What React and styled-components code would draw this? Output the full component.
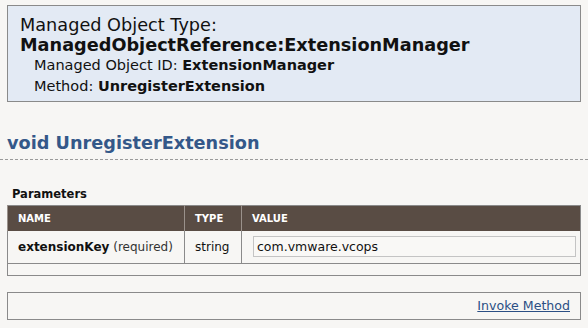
import React from 'react';
import styled, { createGlobalStyle } from 'styled-components';

const GlobalStyle = createGlobalStyle`
  html, body {
    margin: 0;
    padding: 0;
    background: #f7f6f4;
    font-family: "DejaVu Sans", Verdana, sans-serif;
    color: #111;
  }
`;

const Page = styled.div`
  width: 588px;
  height: 328px;
  padding: 5px 7px 0 7px;
  box-sizing: border-box;
  overflow: hidden;
`;

const InfoBox = styled.div`
  background: #e3eaf4;
  border: 1px solid #8a8a8a;
  padding: 9px 12px 0 12px;
  height: 97px;
  box-sizing: border-box;
`;

const TypeLine = styled.div`
  font-size: 17.7px;
  line-height: 20px;
  font-weight: ${(p) => (p.bold ? 'bold' : 'normal')};
`;

const SubLine = styled.div`
  font-size: 14.5px;
  line-height: 21px;
  padding-left: 14px;

  b {
    font-weight: bold;
  }
`;

const MethodTitle = styled.h2`
  margin: 29px -7px 0 -7px;
  padding: 0 0 4px 7px;
  font-size: 17.7px;
  line-height: 24px;
  font-weight: bold;
  color: #345889;
  border-bottom: 1px dashed #9a9a9a;
`;

const SectionLabel = styled.div`
  margin: 27px 0 0 5px;
  font-size: 11.5px;
  font-weight: bold;
  line-height: 14px;
`;

const Table = styled.table`
  margin-top: 4px;
  width: 100%;
  table-layout: fixed;
  border-collapse: collapse;
  border: 1px solid #8a8a8a;
`;

const HeadCell = styled.th`
  background: #594c44;
  color: #fff;
  font-size: 10px;
  font-weight: bold;
  text-align: left;
  height: 25px;
  padding: 0 0 0 10px;
  border-left: 1px solid #9a918b;
  box-sizing: border-box;
`;

const Cell = styled.td`
  font-size: 12px;
  height: 32px;
  padding: 0 4px 0 ${(p) => p.pl || '10px'};
  border-left: 1px solid #8a8a8a;
  border-bottom: 1px solid #8a8a8a;
  white-space: nowrap;
`;

const Muted = styled.span`
  color: #333;
`;

const Input = styled.div`
  border: 1px solid #c4c4c4;
  background: #f9f8f6;
  height: 19px;
  line-height: 19px;
  padding: 0 3px;
  font-size: 12.5px;
`;

const FootRow = styled.td`
  height: 11px;
  padding: 0;
`;

const ActionBox = styled.div`
  margin-top: 16px;
  border: 1px solid #8a8a8a;
  height: 28px;
  box-sizing: border-box;
  display: flex;
  justify-content: flex-end;
  align-items: center;
  padding-right: 10px;
`;

const Link = styled.a`
  font-size: 12.6px;
  color: #2b4f84;
  text-decoration: underline;
  cursor: pointer;
`;

export default function App() {
  return (
    <Page>
      <GlobalStyle />
      <InfoBox>
        <TypeLine>Managed Object Type:</TypeLine>
        <TypeLine bold>ManagedObjectReference:ExtensionManager</TypeLine>
        <SubLine>
          Managed Object ID: <b>ExtensionManager</b>
        </SubLine>
        <SubLine>
          Method: <b>UnregisterExtension</b>
        </SubLine>
      </InfoBox>
      <MethodTitle>void UnregisterExtension</MethodTitle>
      <SectionLabel>Parameters</SectionLabel>
      <Table>
        <colgroup>
          <col style={{ width: 177 }} />
          <col style={{ width: 57 }} />
          <col />
        </colgroup>
        <thead>
          <tr>
            <HeadCell>NAME</HeadCell>
            <HeadCell>TYPE</HeadCell>
            <HeadCell>VALUE</HeadCell>
          </tr>
        </thead>
        <tbody>
          <tr>
            <Cell>
              <b>extensionKey</b> <Muted>(required)</Muted>
            </Cell>
            <Cell>string</Cell>
            <Cell pl="11px">
              <Input>com.vmware.vcops</Input>
            </Cell>
          </tr>
          <tr>
            <FootRow colSpan={3} />
          </tr>
        </tbody>
      </Table>
      <ActionBox>
        <Link>Invoke Method</Link>
      </ActionBox>
    </Page>
  );
}
